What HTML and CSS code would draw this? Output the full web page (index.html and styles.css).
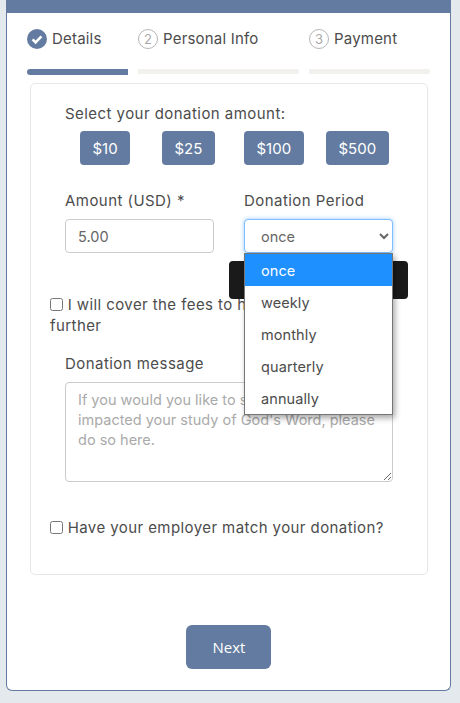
FILE: index.html
```html
<!DOCTYPE html>
<html lang="en">
<head>
  <meta charset="UTF-8">
  <title>Donate</title>
  <link rel="stylesheet" href="styles.css">
</head>
<body>
  <div class="card">
    <div class="card-top"></div>

    <div class="steps">
      <div class="step active">
        <div class="step-head">
          <svg class="step-check" width="20" height="20" viewBox="0 0 20 20">
            <circle cx="10" cy="10" r="10" fill="#637ba0"/>
            <path d="M5.6 10.3l3 3 5.8-6" fill="none" stroke="#fff" stroke-width="2.6"/>
          </svg>
          <span>Details</span>
        </div>
        <div class="step-bar"></div>
      </div>
      <div class="step">
        <div class="step-head">
          <span class="step-num">2</span>
          <span>Personal Info</span>
        </div>
        <div class="step-bar"></div>
      </div>
      <div class="step">
        <div class="step-head">
          <span class="step-num">3</span>
          <span>Payment</span>
        </div>
        <div class="step-bar"></div>
      </div>
    </div>

    <form class="panel">
      <p class="amount-title">Select your donation amount:</p>
      <div class="amounts">
        <div><button type="button" class="amount-btn">$10</button></div>
        <div><button type="button" class="amount-btn">$25</button></div>
        <div><button type="button" class="amount-btn">$100</button></div>
        <div><button type="button" class="amount-btn">$500</button></div>
      </div>

      <div class="fields">
        <div class="field">
          <label for="amount">Amount (USD) *</label>
          <input type="text" id="amount" value="5.00">
        </div>
        <div class="field">
          <label for="period">Donation Period</label>
          <select id="period">
            <option>once</option>
            <option>weekly</option>
            <option>monthly</option>
            <option>quarterly</option>
            <option>annually</option>
          </select>
        </div>
      </div>

      <label class="check fees">
        <input type="checkbox">
        I will cover the fees to help this gift go further
      </label>

      <div class="message">
        <label for="message">Donation message</label>
        <textarea id="message" placeholder="If you would you like to share how it has impacted your study of God's Word, please do so here."></textarea>
      </div>

      <label class="check employer">
        <input type="checkbox">
        Have your employer match your donation?
      </label>

      <div class="dark-block"></div>

      <ul class="period-menu">
        <li class="selected">once</li>
        <li>weekly</li>
        <li>monthly</li>
        <li>quarterly</li>
        <li>annually</li>
      </ul>
    </form>

    <div class="actions">
      <button type="button" class="next">Next</button>
    </div>
  </div>
</body>
</html>
```

FILE: styles.css
```css
* {
  box-sizing: border-box;
}
body {
  margin: 0;
  height: 703px;
  overflow: hidden;
  background: #e4e9ee;
  font-family: Inter, "Open Sans", sans-serif;
  font-size: 15px;
  letter-spacing: 0.45px;
  color: #4c4c4c;
}
.card {
  width: 445px;
  height: 691px;
  margin-left: 6px;
  background: #fff;
  border: 1px solid #637ba0;
  border-top: 0;
  border-radius: 0 0 6px 6px;
}
.card-top {
  height: 13px;
  margin: 0 -1px;
  background: #637ba0;
}

.steps {
  display: grid;
  grid-template-columns: 101px 161px 121px;
  gap: 10px;
  margin: 15px 0 0 20px;
}
.step-head {
  display: flex;
  align-items: center;
  gap: 5px;
  height: 21px;
  font-size: 15px;
  letter-spacing: 0.2px;
}
.step-num {
  display: flex;
  align-items: center;
  justify-content: center;
  width: 20px;
  height: 20px;
  border: 1px solid #b5b5b5;
  border-radius: 50%;
  font-size: 13px;
  color: #aaa;
}
.step-bar {
  height: 5px;
  margin-top: 20px;
  background: #f2f1ee;
  border-radius: 0 2px 2px 0;
}
.step:first-child .step-bar {
  height: 6px;
  background: #637ba0;
  border-radius: 3px 0 0 3px;
}

.panel {
  position: relative;
  width: 398px;
  height: 492px;
  margin: 8px 0 0 23px;
  padding: 21px 19px 0;
  border: 1px solid #e5e8ea;
  border-radius: 5px;
}
.amount-title {
  margin: 0 0 8px 15px;
  line-height: 18px;
}
.amounts {
  display: grid;
  grid-template-columns: repeat(4, 82px);
  margin-left: 30px;
}
.amount-btn {
  height: 34px;
  padding: 0 12.5px;
  border: 0;
  border-radius: 4px;
  background: #637ba0;
  color: #fff;
  font-family: inherit;
  font-size: 15px;
}

.fields {
  display: grid;
  grid-template-columns: 149px 149px;
  gap: 30px;
  margin: 27px 0 0 15px;
}
.field label,
.message label {
  display: block;
  margin-bottom: 9px;
  line-height: 18px;
}
.field input,
.field select {
  width: 100%;
  height: 34px;
  border: 1px solid #ccc;
  border-radius: 4px;
  background: #fff;
  color: #666;
  font-family: inherit;
  font-size: 14.5px;
}
.field input {
  padding: 0 12px;
}
.field select {
  padding: 0 8px 0 12px;
  border-color: #80bdff;
  box-shadow: 0 0 4px rgba(128, 189, 255, 0.8);
}

.check {
  display: block;
  line-height: 21px;
  letter-spacing: 0.42px;
}
.check input {
  width: 13px;
  height: 13px;
  margin: 0;
  vertical-align: -1px;
}
.fees {
  width: 330px;
  margin-top: 41px;
}
.message {
  margin: 19px 0 0 15px;
}
.message textarea {
  display: block;
  width: 328px;
  height: 100px;
  padding: 7px 12px;
  border: 1px solid #ccc;
  border-radius: 4px;
  color: #666;
  font-family: inherit;
  font-size: 14.5px;
  line-height: 20px;
}
.message textarea::placeholder {
  color: #aaa;
}
.employer {
  margin-top: 35px;
}

.dark-block {
  position: absolute;
  left: 198px;
  top: 177px;
  width: 179px;
  height: 38px;
  background: #1a1a1a;
  border-radius: 4px;
}
.period-menu {
  position: absolute;
  left: 213px;
  top: 169px;
  width: 149px;
  margin: 0;
  padding: 0;
  list-style: none;
  background: #fff;
  border: 1px solid #767676;
  box-shadow: 2px 3px 6px rgba(0, 0, 0, 0.35);
  font-size: 14.5px;
  letter-spacing: 0.1px;
}
.period-menu li {
  height: 32px;
  padding: 1px 0 0 16px;
  line-height: 32px;
}
.period-menu .selected {
  background: #1e90ff;
  color: #fff;
}

.actions {
  display: flex;
  justify-content: center;
  margin-top: 50px;
  padding-right: 1px;
}
.next {
  width: 85px;
  height: 44px;
  padding: 0 0 0 2px;
  border: 0;
  border-radius: 6px;
  background: #637ba0;
  color: #fff;
  font-family: "Open Sans", sans-serif;
  font-size: 15px;
}
```
